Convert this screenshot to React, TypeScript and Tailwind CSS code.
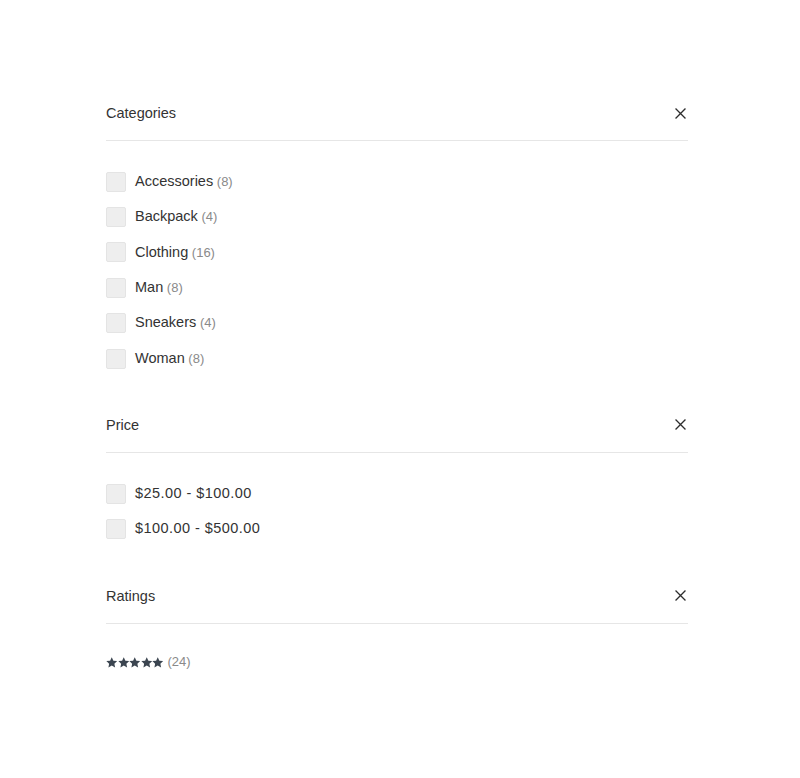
import React from "react";

const font = { fontFamily: '"Liberation Sans", Arial, sans-serif' };

function XIcon() {
  return (
    <svg width="11" height="11" viewBox="0 0 11 11" fill="none">
      <path d="M1 1L10 10M10 1L1 10" stroke="#2d2d2d" strokeWidth="1.3" strokeLinecap="square" />
    </svg>
  );
}

function Header({ title }: { title: string }) {
  return (
    <div className="flex items-center justify-between border-b border-[#e6e6e6] pb-[17px]">
      <span className="text-[14.5px] leading-[20px] text-[#333]">{title}</span>
      <span className="mr-[2px] flex items-center">
        <XIcon />
      </span>
    </div>
  );
}

function Row({ label, count, wide }: { label: string; count?: string; wide?: boolean }) {
  return (
    <div className="flex h-[35.4px] items-center">
      <span className="h-[20px] w-[20px] rounded-[2px] border border-[#e4e4e4] bg-[#eeeeee]" />
      <span className={"ml-[9px] text-[14.5px] text-[#333] " + (wide ? "tracking-[0.45px]" : "")}>
        {label}
        {count && <span className="text-[13px] text-[#8a8a8a]"> {count}</span>}
      </span>
    </div>
  );
}

function Star() {
  return (
    <svg width="11.5" height="11" viewBox="0 0 24 23">
      <path
        d="M12 0.5l3.4 7.1 7.9 1-5.8 5.4 1.5 7.9L12 17.9l-7 4 1.5-7.9L0.7 8.6l7.9-1z"
        fill="#3b4550"
      />
    </svg>
  );
}

export default function App() {
  const cats: [string, string][] = [
    ["Accessories", "(8)"],
    ["Backpack", "(4)"],
    ["Clothing", "(16)"],
    ["Man", "(8)"],
    ["Sneakers", "(4)"],
    ["Woman", "(8)"],
  ];
  return (
    <div className="min-h-[778px] w-[800px] bg-white" style={font}>
      <div className="ml-[106px] w-[582px] pt-[103px]">
        <Header title="Categories" />
        <div className="mt-[23px]">
          {cats.map(([l, c]) => (
            <Row key={l} label={l} count={c} />
          ))}
        </div>
        <div className="mt-[38.5px]">
          <Header title="Price" />
          <div className="mt-[23px]">
            <Row label="$25.00 - $100.00" wide />
            <Row label="$100.00 - $500.00" wide />
          </div>
        </div>
        <div className="mt-[39px]">
          <Header title="Ratings" />
          <div className="mt-[21px] flex h-[35px] items-center">
            <div className="flex">
              <Star />
              <Star />
              <Star />
              <Star />
              <Star />
            </div>
            <span className="ml-[4px] text-[13px] text-[#8a8a8a]">(24)</span>
          </div>
        </div>
      </div>
    </div>
  );
}
